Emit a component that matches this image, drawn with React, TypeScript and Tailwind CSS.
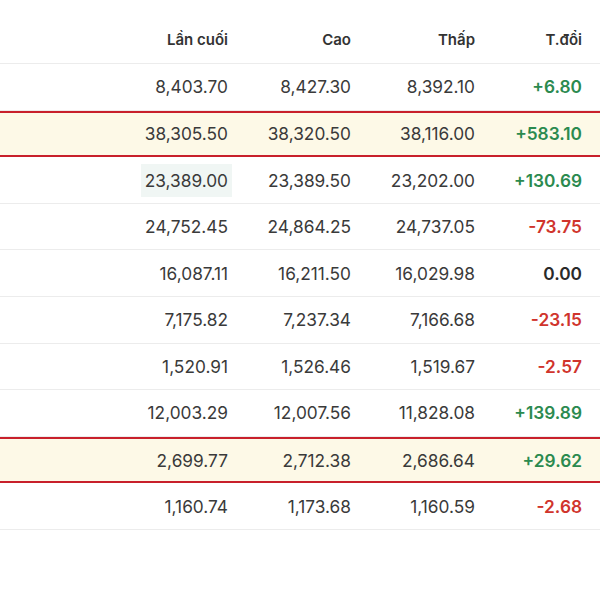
import React from "react";

type Row = { last: string; high: string; low: string; chg: string; hl?: boolean; flash?: boolean };

const rows: Row[] = [
  { last: "8,403.70", high: "8,427.30", low: "8,392.10", chg: "+6.80" },
  { last: "38,305.50", high: "38,320.50", low: "38,116.00", chg: "+583.10", hl: true },
  { last: "23,389.00", high: "23,389.50", low: "23,202.00", chg: "+130.69", flash: true },
  { last: "24,752.45", high: "24,864.25", low: "24,737.05", chg: "-73.75" },
  { last: "16,087.11", high: "16,211.50", low: "16,029.98", chg: "0.00" },
  { last: "7,175.82", high: "7,237.34", low: "7,166.68", chg: "-23.15" },
  { last: "1,520.91", high: "1,526.46", low: "1,519.67", chg: "-2.57" },
  { last: "12,003.29", high: "12,007.56", low: "11,828.08", chg: "+139.89" },
  { last: "2,699.77", high: "2,712.38", low: "2,686.64", chg: "+29.62", hl: true },
  { last: "1,160.74", high: "1,173.68", low: "1,160.59", chg: "-2.68" },
];

function chgColor(c: string) {
  if (c.startsWith("+")) return "text-[#2b8a4f]";
  if (c.startsWith("-")) return "text-[#d0342c]";
  return "text-[#2a2a2a]";
}

export default function App() {
  return (
    <div
      className="w-[600px] h-[600px] bg-white overflow-hidden text-[#3a3a3a]"
      style={{ fontFamily: "Inter, 'Noto Sans', sans-serif" }}
    >
      <div className="grid grid-cols-[228px_123px_124px_107px] pr-[18px] h-[64px] border-b border-[#ececec] items-center pt-[18px] text-[15px] font-semibold text-[#333]">
        <div className="text-right">Lần cuối</div>
        <div className="text-right">Cao</div>
        <div className="text-right">Thấp</div>
        <div className="text-right">T.đổi</div>
      </div>
      {rows.map((r, i) => (
        <div
          key={i}
          className={
            "grid grid-cols-[228px_123px_124px_107px] pr-[18px] h-[46.6px] items-center pt-px text-[17.3px] box-border " +
            (r.hl
              ? "bg-[#fdf9e7] border-y-2 border-[#c8202b]"
              : "border-b border-[#ececec]")
          }
        >
          <div className="flex justify-end">
            <span className={r.flash ? "bg-[#f0f6f4] px-[4px] -mr-[4px] py-[4px]" : ""}>{r.last}</span>
          </div>
          <div className="text-right">{r.high}</div>
          <div className="text-right">{r.low}</div>
          <div className={"text-right font-semibold " + chgColor(r.chg)}>{r.chg}</div>
        </div>
      ))}
    </div>
  );
}
